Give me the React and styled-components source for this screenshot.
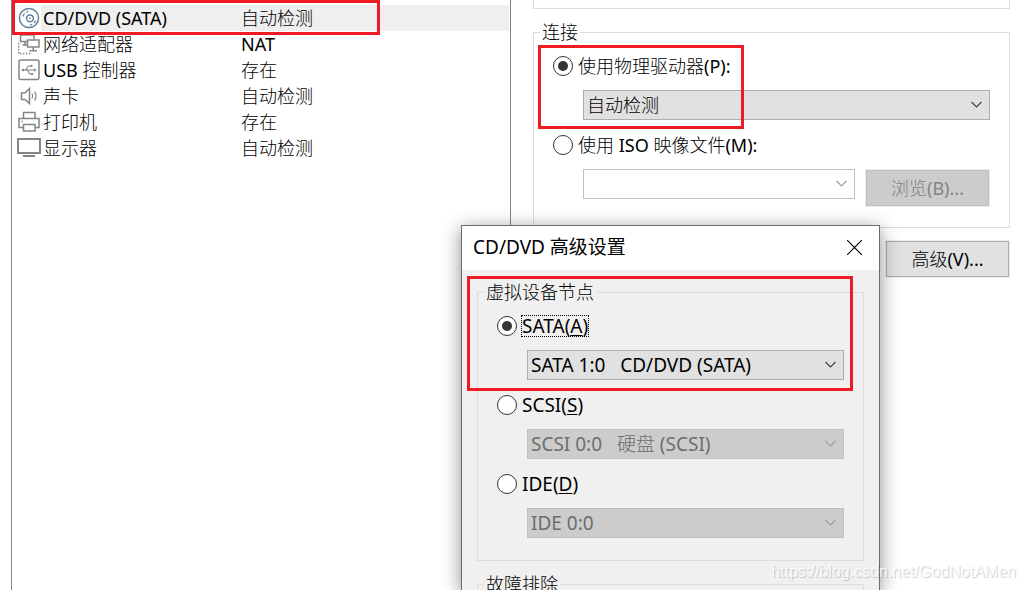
import React from "react";
import styled, { createGlobalStyle } from "styled-components";

const UI_FONT = `"Noto Sans", "Noto Sans CJK SC Light", "Noto Sans CJK SC", sans-serif`;

const GlobalStyle = createGlobalStyle`
  *, *::before, *::after { box-sizing: border-box; }
  body {
    margin: 0;
    background: #fff;
    color: #000;
    font: 18px/26px ${UI_FONT};
  }
  button, select, input { font: inherit; color: inherit; margin: 0; }
`;

const Page = styled.main`
  position: relative;
  display: grid;
  grid-template-columns: 1fr 1fr;
  min-height: 100vh;
  overflow: hidden;
`;

const DevicePane = styled.section`
  margin: 0 1px 0 11px;
  padding: 5px 1px 0 0;
  border: solid #7f848c;
  border-width: 0 1px;
`;

const DeviceTable = styled.table`
  width: 100%;
  border-collapse: collapse;
  table-layout: fixed;
`;

const DeviceRow = styled.tr`
  height: 26px;
  --row: ${(p) => (p.$selected ? "#efefef" : "transparent")};
`;

const DeviceCell = styled.td`
  width: ${(p) => p.$width || "auto"};
  padding: 0;
  background: ${(p) => (p.$icon ? "transparent" : "var(--row)")};
  white-space: nowrap;
`;

const NameLine = styled.div`
  display: flex;
  align-items: center;
  height: 26px;
  padding-left: 5px;
`;

const NameText = styled.span`
  flex: 1;
  height: 26px;
  padding-left: 2px;
  background: var(--row);
`;

const Glyph = styled.svg`
  flex: none;
  width: 24px;
  height: 24px;
  fill: none;
  stroke: ${(p) => p.$color || "#858585"};
  stroke-width: 1.5;
`;

const SettingsPane = styled.section`
  display: flex;
  flex-direction: column;
  padding: 0 14px 0 21px;
`;

const StatusGroup = styled.div`
  height: 9px;
  border: 1px solid #dcdcdc;
  border-top: 0;
`;

const Group = styled.fieldset`
  min-width: 0;
  margin: ${(p) => (p.$first ? "0" : "11px 0 0")};
  padding: 8px 19px ${(p) => (p.$roomy ? "22px" : "20px")};
  border: 1px solid #dcdcdc;
`;

const Legend = styled.legend`
  height: 25px;
  margin-left: -13px;
  padding: 0 2px;
  line-height: 25px;
`;

const Options = styled.div`
  display: flex;
  flex-direction: column;
  gap: 12px;
  font-size: ${(p) => (p.$large ? "19px" : "18px")};
`;

const Option = styled.div`
  display: flex;
  flex-direction: column;
  gap: 11px;
`;

const RadioLabel = styled.label`
  display: flex;
  align-items: center;
  gap: 4px;
  height: 26px;
`;

const Radio = styled.input`
  appearance: none;
  display: grid;
  place-items: center;
  width: 20px;
  height: 20px;
  border: 1px solid #333;
  border-radius: 50%;
  background: #fff;
  &:checked::before {
    content: "";
    width: 10px;
    height: 10px;
    border-radius: 50%;
    background: #333;
  }
`;

const RadioText = styled.span`
  height: 22px;
  padding: 0 1px;
  line-height: 22px;
  outline: ${(p) => (p.$focused ? "1px dotted #000" : "none")};
  outline-offset: -1px;
  u { text-underline-offset: 2px; text-decoration-thickness: 1px; }
`;

const ControlRow = styled.div`
  display: flex;
  align-items: flex-start;
  gap: 10px;
  padding-left: 30px;
`;

const SelectBox = styled.span`
  position: relative;
  display: block;
  flex: 1;
  min-width: 0;
  svg {
    position: absolute;
    top: 11px;
    right: 7px;
    pointer-events: none;
  }
`;

const Select = styled.select`
  appearance: none;
  display: block;
  width: 100%;
  height: 30px;
  padding: 0 28px 0 3px;
  border: 1px solid #adadad;
  border-radius: 0;
  background: #e1e1e1;
  line-height: 26px;
  opacity: 1;
  &:disabled {
    border-color: #bfbfbf;
    background: ${(p) => (p.$editable ? "#fff" : "#ccc")};
    color: #6d6d6d;
  }
`;

const Button = styled.button`
  width: 125px;
  height: 38px;
  padding: 0;
  border: 1px solid #ececec;
  box-shadow: inset 0 0 0 1px #adadad;
  background: #e1e1e1;
  &:disabled {
    background: #ccc;
    box-shadow: inset 0 0 0 1px #bfbfbf;
    color: #838383;
  }
`;

const Actions = styled.div`
  display: flex;
  justify-content: flex-end;
  margin-top: 12px;
`;

const Dialog = styled.div`
  position: absolute;
  top: 225px;
  bottom: 0;
  left: 461px;
  display: flex;
  flex-direction: column;
  width: 419px;
  border: 1px solid #6b6b6b;
  border-bottom: 0;
  background: #f0f0f0;
  box-shadow: 0 4px 18px rgba(0, 0, 0, 0.45);
`;

const TitleBar = styled.header`
  display: flex;
  flex: none;
  align-items: center;
  justify-content: space-between;
  height: 44px;
  padding: 0 17px 2px 11px;
  background: #fff;
`;

const Title = styled.h1`
  margin: 0;
  font: 400 19px/26px "Noto Sans", "Noto Sans CJK SC", sans-serif;
`;

const CloseButton = styled.button`
  display: flex;
  padding: 0;
  border: 0;
  background: none;
`;

const DialogBody = styled.div`
  flex: 1;
  min-height: 0;
  padding: 10px 15px 0;
  overflow: hidden;
`;

const Highlight = styled.div`
  position: absolute;
  top: ${(p) => p.$top}px;
  left: ${(p) => p.$left}px;
  width: ${(p) => p.$width}px;
  height: ${(p) => p.$height}px;
  border: 3px solid #ed1c24;
  pointer-events: none;
`;

const Watermark = styled.span`
  position: absolute;
  right: 8px;
  bottom: 6px;
  color: rgba(255, 255, 255, 0.85);
  font: 16px/24px "Liberation Sans", Arial, sans-serif;
  text-shadow: 1px 1px 1px rgba(0, 0, 0, 0.2);
`;

const icons = {
  disc: (
    <Glyph viewBox="0 0 24 24" $color="#66829a">
      <circle cx="12" cy="12" r="9.600" />
      <circle cx="13" cy="12.300" r="3.400" />
      <path d="M6 10.500a6.500 6.500 0 0 1 1.700-3M9.200 6.200l2-.8M18.500 14.500a6.500 6.500 0 0 1-1.600 2.500M15.200 18.300l-2 .8" strokeWidth="1.200" />
      <circle cx="13" cy="12.300" r=".9" fill="#66829a" stroke="none" />
    </Glyph>
  ),
  network: (
    <Glyph viewBox="0 0 24 24">
      <path d="M10.500 9.500H3.500V3h13.500v4.500M8 9.500v3.500M5.500 13h5" />
      <rect x="10.500" y="8" width="11.500" height="7" />
      <path d="M16.200 15v3.500M12.500 18.700h7.500" />
      <path d="M1.700 11v11M3 21.500h12" strokeDasharray="1.500 1.500" />
    </Glyph>
  ),
  usb: (
    <Glyph viewBox="0 0 24 24">
      <rect x="2" y="2" width="20" height="19.500" rx="2" />
      <path d="M5 12h13M8 12c2 0 2-4 4-4h2M9.500 12c2 0 2 4 4 4h1" strokeWidth="1.100" />
      <circle cx="6" cy="12" r="1.300" fill="#858585" stroke="none" />
      <path d="M17 10.300l2.700 1.700-2.700 1.700zM13.500 7h2v2h-2zM14 15h2v2h-2z" fill="#858585" stroke="none" />
    </Glyph>
  ),
  sound: (
    <Glyph viewBox="0 0 24 24">
      <path d="M4.500 9h3.500l4.500-4.500v15L8 15.500H4.500z" />
      <path d="M15 9.500q1.500 2.500 0 5M17.500 7.500q3 4.500 0 9" strokeWidth="1.200" />
    </Glyph>
  ),
  printer: (
    <Glyph viewBox="0 0 24 24">
      <path d="M6.500 8.500V2.500h11.500v6M6.500 17.500H2v-9h20v9h-4" />
      <rect x="6.500" y="14.500" width="11.500" height="6.500" />
      <path d="M4.500 11.500h1.500" />
    </Glyph>
  ),
  display: (
    <Glyph viewBox="0 0 24 24">
      <rect x="1" y="3" width="22" height="14" strokeWidth="2" />
      <path d="M6 20h12" strokeWidth="2" />
    </Glyph>
  ),
};

const devices = [
  { icon: "disc", name: "CD/DVD (SATA)", summary: "自动检测", selected: true },
  { icon: "network", name: "网络适配器", summary: "NAT" },
  { icon: "usb", name: "USB 控制器", summary: "存在" },
  { icon: "sound", name: "声卡", summary: "自动检测" },
  { icon: "printer", name: "打印机", summary: "存在" },
  { icon: "display", name: "显示器", summary: "自动检测" },
];

function DropDown({ label, value, disabled, editable }) {
  return (
    <SelectBox>
      <Select aria-label={label} disabled={disabled} $editable={editable}>
        <option>{value}</option>
      </Select>
      <svg width="13" height="8" viewBox="0 0 13 8" fill="none" stroke={disabled ? "#a0a0a0" : "#444"} strokeWidth="1.200">
        <path d="M1.500 1l5 5 5-5" />
      </svg>
    </SelectBox>
  );
}

function RadioOption({ name, text, accessKey, checked, focused, children }) {
  return (
    <Option>
      <RadioLabel>
        <Radio type="radio" name={name} defaultChecked={checked} />
        <RadioText $focused={focused}>
          {text}
          {accessKey && <>(<u>{accessKey}</u>)</>}
        </RadioText>
      </RadioLabel>
      <ControlRow>{children}</ControlRow>
    </Option>
  );
}

export default function App() {
  return (
    <Page>
      <GlobalStyle />
      <DevicePane>
        <DeviceTable>
          <tbody>
            {devices.map((d) => (
              <DeviceRow key={d.name} $selected={d.selected}>
                <DeviceCell $icon $width="229px">
                  <NameLine>
                    {icons[d.icon]}
                    <NameText>{d.name}</NameText>
                  </NameLine>
                </DeviceCell>
                <DeviceCell>{d.summary}</DeviceCell>
              </DeviceRow>
            ))}
          </tbody>
        </DeviceTable>
      </DevicePane>

      <SettingsPane>
        <StatusGroup />
        <Group>
          <Legend>连接</Legend>
          <Options>
            <RadioOption name="source" text="使用物理驱动器(P):" checked>
              <DropDown label="物理驱动器" value="自动检测" />
            </RadioOption>
            <RadioOption name="source" text="使用 ISO 映像文件(M):">
              <DropDown label="ISO 映像文件" value="" disabled editable />
              <Button type="button" disabled>浏览(B)...</Button>
            </RadioOption>
          </Options>
        </Group>
        <Actions>
          <Button type="button">高级(V)...</Button>
        </Actions>
      </SettingsPane>

      <Dialog role="dialog" aria-labelledby="dialog-title">
        <TitleBar>
          <Title id="dialog-title">CD/DVD 高级设置</Title>
          <CloseButton type="button" aria-label="关闭">
            <svg width="15" height="15" viewBox="0 0 15 15" stroke="#000" strokeWidth="1.200">
              <path d="M0 0l15 15M15 0L0 15" />
            </svg>
          </CloseButton>
        </TitleBar>
        <DialogBody>
          <Group $first $roomy>
            <Legend>虚拟设备节点</Legend>
            <Options $large>
              <RadioOption name="node" text="SATA" accessKey="A" checked focused>
                <DropDown label="SATA" value={"SATA 1:0\u00a0\u00a0\u00a0CD/DVD (SATA)"} />
              </RadioOption>
              <RadioOption name="node" text="SCSI" accessKey="S">
                <DropDown label="SCSI" value={"SCSI 0:0\u00a0\u00a0\u00a0硬盘 (SCSI)"} disabled />
              </RadioOption>
              <RadioOption name="node" text="IDE" accessKey="D">
                <DropDown label="IDE" value="IDE 0:0" disabled />
              </RadioOption>
            </Options>
          </Group>
          <Group>
            <Legend>故障排除</Legend>
          </Group>
        </DialogBody>
      </Dialog>

      <Highlight $top={0} $left={12} $width={368} $height={35} />
      <Highlight $top={45} $left={538} $width={206} $height={84} />
      <Highlight $top={276} $left={467} $width={386} $height={115} />
      <Watermark>https://blog.csdn.net/GodNotAMen</Watermark>
    </Page>
  );
}
